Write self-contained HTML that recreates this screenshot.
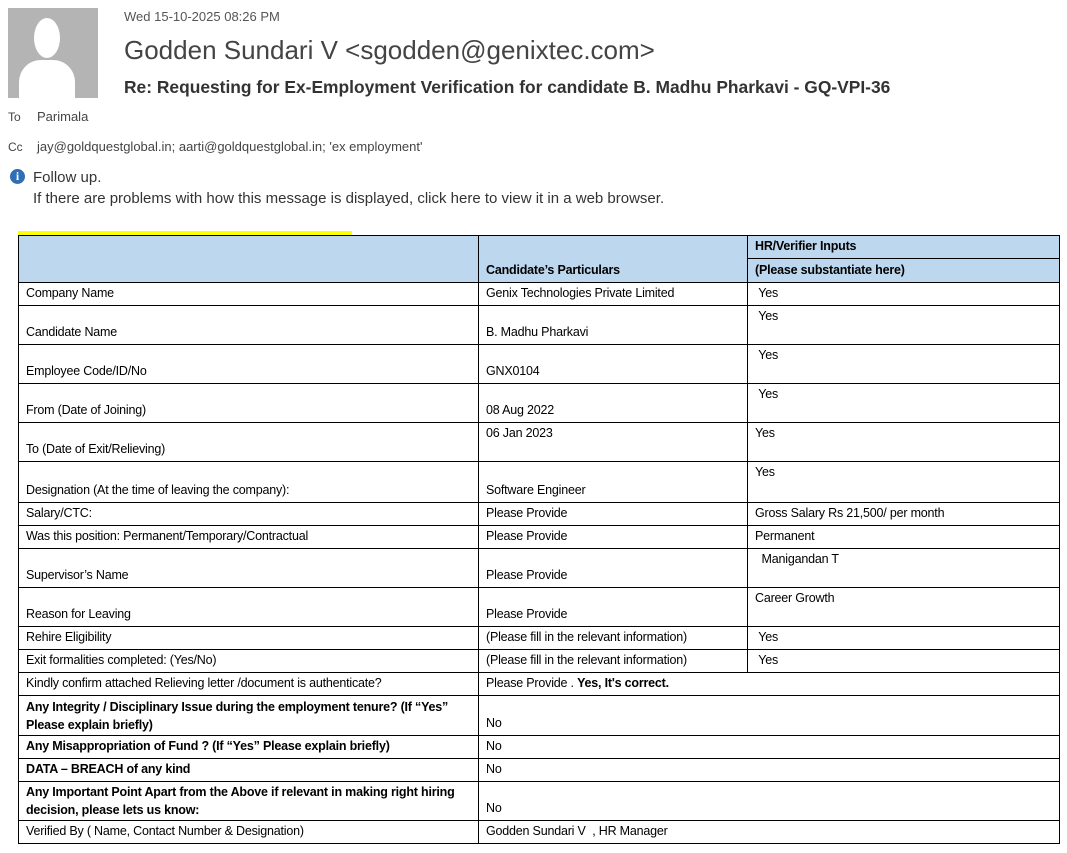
<!DOCTYPE html>
<html><head><meta charset="utf-8"><style>
body{margin:0;width:1067px;height:853px;background:#fff;font-family:"Liberation Sans",sans-serif;color:#000;position:relative;overflow:hidden}
.a{position:absolute;white-space:nowrap}
table{position:absolute;left:18px;top:235px;border-collapse:collapse;table-layout:fixed;width:1041px;font-size:12.5px;letter-spacing:-0.2px}
td{border:1px solid #000;padding:0 0 2px 7px;vertical-align:bottom;line-height:19px;overflow:hidden}
td.t{vertical-align:top;padding-top:1px}
td.w{line-height:18px;padding-bottom:1px;padding-right:12px}
.h{background:#bdd7ee;font-weight:bold}
b{font-weight:bold}
</style></head><body>
<div style="position:absolute;left:8px;top:8px;width:90px;height:90px;background:#b4b4b4;overflow:hidden">
<div style="position:absolute;left:26px;top:10px;width:26px;height:40px;border-radius:50%;background:#fff"></div>
<div style="position:absolute;left:11px;top:52px;width:56px;height:60px;border-radius:22px 22px 0 0;background:#fff"></div>
</div>
<div class="a" style="left:124px;top:9px;font-size:13px;color:#555">Wed 15-10-2025 08:26 PM</div>
<div class="a" style="left:124px;top:35px;font-size:26px;color:#444">Godden Sundari V &lt;sgodden@genixtec.com&gt;</div>
<div class="a" style="left:124px;top:77px;font-size:17.4px;font-weight:bold;color:#333">Re: Requesting for Ex-Employment Verification for candidate B. Madhu Pharkavi - GQ-VPI-36</div>
<div class="a" style="left:8px;top:110px;font-size:12px;color:#444">To</div>
<div class="a" style="left:37px;top:109px;font-size:13px;color:#444">Parimala</div>
<div class="a" style="left:8px;top:140px;font-size:12px;color:#444">Cc</div>
<div class="a" style="left:37px;top:139px;font-size:13px;color:#444">jay@goldquestglobal.in; aarti@goldquestglobal.in; 'ex employment'</div>
<div class="a" style="left:10px;top:169px;width:15px;height:15px;border-radius:50%;background:#2f6fb5;color:#fff;font-size:12px;font-weight:bold;text-align:center;line-height:15px;font-family:'Liberation Serif',serif">i</div>
<div class="a" style="left:33px;top:169px;font-size:15px;color:#333">Follow up.</div>
<div class="a" style="left:33px;top:190px;font-size:15px;color:#333">If there are problems with how this message is displayed, click here to view it in a web browser.</div>
<div class="a" style="left:18px;top:231px;width:334px;height:4px;background:#ffff00"></div>
<table>
<colgroup><col style="width:460px"><col style="width:269px"><col style="width:312px"></colgroup>
<tr style="height:23px"><td class="h" rowspan="2"></td><td class="h" rowspan="2">Candidate’s Particulars</td><td class="h">HR/Verifier Inputs</td></tr>
<tr style="height:24px"><td class="h">(Please substantiate here)</td></tr>
<tr style="height:23px"><td>Company Name</td><td>Genix Technologies Private Limited</td><td>&nbsp;Yes</td></tr>
<tr style="height:39px"><td>Candidate Name</td><td>B. Madhu Pharkavi</td><td class="t">&nbsp;Yes</td></tr>
<tr style="height:39px"><td>Employee Code/ID/No</td><td>GNX0104</td><td class="t">&nbsp;Yes</td></tr>
<tr style="height:39px"><td>From (Date of Joining)</td><td>08 Aug 2022</td><td class="t">&nbsp;Yes</td></tr>
<tr style="height:39px"><td>To (Date of Exit/Relieving)</td><td class="t">06 Jan 2023</td><td class="t">Yes</td></tr>
<tr style="height:41px"><td>Designation (At the time of leaving the company):</td><td>Software Engineer</td><td class="t">Yes</td></tr>
<tr style="height:23px"><td>Salary/CTC:</td><td>Please Provide</td><td>Gross Salary Rs 21,500/ per month</td></tr>
<tr style="height:23px"><td>Was this position: Permanent/Temporary/Contractual</td><td>Please Provide</td><td>Permanent</td></tr>
<tr style="height:39px"><td>Supervisor’s Name</td><td>Please Provide</td><td class="t">&nbsp;&nbsp;Manigandan T</td></tr>
<tr style="height:39px"><td>Reason for Leaving</td><td>Please Provide</td><td class="t">Career Growth</td></tr>
<tr style="height:23px"><td>Rehire Eligibility</td><td>(Please fill in the relevant information)</td><td>&nbsp;Yes</td></tr>
<tr style="height:23px"><td>Exit formalities completed: (Yes/No)</td><td>(Please fill in the relevant information)</td><td>&nbsp;Yes</td></tr>
<tr style="height:23px"><td>Kindly confirm attached Relieving letter /document is authenticate?</td><td colspan="2">Please Provide . <b>Yes, It's correct.</b></td></tr>
<tr style="height:40px"><td class="w"><b>Any Integrity / Disciplinary Issue during the employment tenure? (If “Yes” Please explain briefly)</b></td><td colspan="2">No</td></tr>
<tr style="height:23px"><td><b>Any Misappropriation of Fund ? (If “Yes” Please explain briefly)</b></td><td colspan="2">No</td></tr>
<tr style="height:23px"><td><b>DATA – BREACH of any kind</b></td><td colspan="2">No</td></tr>
<tr style="height:39px"><td class="w"><b>Any Important Point Apart from the Above if relevant in making right hiring decision, please lets us know:</b></td><td colspan="2">No</td></tr>
<tr style="height:23px"><td>Verified By ( Name, Contact Number &amp; Designation)</td><td colspan="2">Godden Sundari V&nbsp; , HR Manager</td></tr>
</table>
</body></html>
